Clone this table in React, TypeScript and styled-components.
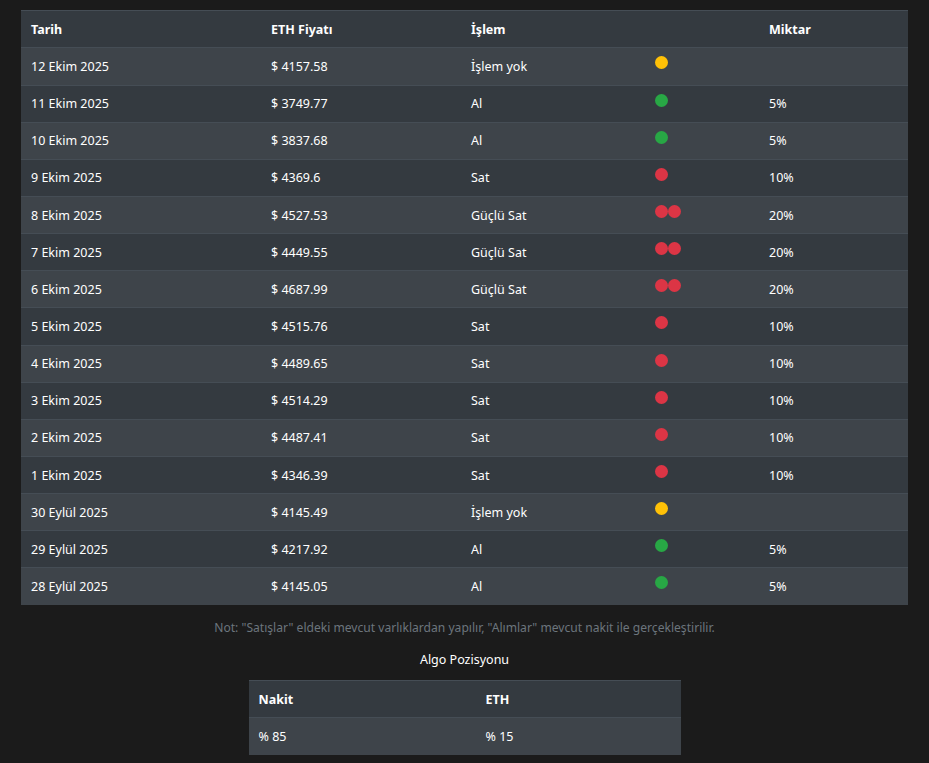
import React from "react";
import styled, { createGlobalStyle } from "styled-components";

const Global = createGlobalStyle`
  html, body { margin: 0; padding: 0; background: #1b1b1b; }
  body { font-family: "Noto Sans", "Open Sans", sans-serif; color: #fff; }
`;

const Page = styled.div`
  padding: 10px 21px 8px;
  display: flex;
  flex-direction: column;
  align-items: center;
`;

const Table = styled.table<{ $width: number }>`
  width: ${(p) => p.$width}px;
  border-collapse: collapse;
  table-layout: fixed;
  background: #343a40;
  font-size: 12.5px;
  color: #fff;
`;

const HeadCell = styled.th<{ $w: number }>`
  width: ${(p) => p.$w}px;
  text-align: left;
  font-weight: 700;
  padding: 0 10px;
  height: 37.4px;
  box-sizing: border-box;
  border-top: 1px solid #454d55;
`;

const Row = styled.tr`
  &:nth-child(odd) { background: #3e444a; }
`;

const Cell = styled.td`
  padding: 0 10px;
  height: 37.15px;
  box-sizing: border-box;
  border-top: 1px solid #454d55;
  vertical-align: middle;
`;

const DotCell = styled(Cell)`
  vertical-align: top;
  padding-top: 8px;
`;

const Dots = styled.span`
  display: inline-flex;
`;

const Dot = styled.span<{ $c: string }>`
  width: 13px;
  height: 13px;
  border-radius: 50%;
  background: ${(p) => p.$c};
  display: inline-block;
`;

const Note = styled.p`
  margin: 14px 0 0;
  font-size: 12.1px;
  color: #6c757d;
  text-align: center;
`;

const Title = styled.div`
  margin-top: 15px;
  font-size: 12.5px;
  color: #fff;
  text-align: center;
  margin-bottom: 12px;
`;

type Kind = "none" | "buy" | "sell" | "strong";
const rows: [string, string, Kind][] = [
  ["12 Ekim 2025", "4157.58", "none"],
  ["11 Ekim 2025", "3749.77", "buy"],
  ["10 Ekim 2025", "3837.68", "buy"],
  ["9 Ekim 2025", "4369.6", "sell"],
  ["8 Ekim 2025", "4527.53", "strong"],
  ["7 Ekim 2025", "4449.55", "strong"],
  ["6 Ekim 2025", "4687.99", "strong"],
  ["5 Ekim 2025", "4515.76", "sell"],
  ["4 Ekim 2025", "4489.65", "sell"],
  ["3 Ekim 2025", "4514.29", "sell"],
  ["2 Ekim 2025", "4487.41", "sell"],
  ["1 Ekim 2025", "4346.39", "sell"],
  ["30 Eylül 2025", "4145.49", "none"],
  ["29 Eylül 2025", "4217.92", "buy"],
  ["28 Eylül 2025", "4145.05", "buy"],
];

const info: Record<Kind, { label: string; amt: string; dots: string[] }> = {
  none: { label: "İşlem yok", amt: "", dots: ["#ffc107"] },
  buy: { label: "Al", amt: "5%", dots: ["#28a745"] },
  sell: { label: "Sat", amt: "10%", dots: ["#dc3545"] },
  strong: { label: "Güçlü Sat", amt: "20%", dots: ["#dc3545", "#dc3545"] },
};

export default function App() {
  return (
    <>
      <Global />
      <Page>
        <Table $width={887}>
          <thead>
            <tr>
              <HeadCell $w={240}>Tarih</HeadCell>
              <HeadCell $w={200}>ETH Fiyatı</HeadCell>
              <HeadCell $w={184}>İşlem</HeadCell>
              <HeadCell $w={114}></HeadCell>
              <HeadCell $w={149}>Miktar</HeadCell>
            </tr>
          </thead>
          <tbody>
            {rows.map(([d, p, k]) => (
              <Row key={d}>
                <Cell>{d}</Cell>
                <Cell>$ {p}</Cell>
                <Cell>{info[k].label}</Cell>
                <DotCell>
                  <Dots>
                    {info[k].dots.map((c, i) => (
                      <Dot key={i} $c={c} />
                    ))}
                  </Dots>
                </DotCell>
                <Cell>{info[k].amt}</Cell>
              </Row>
            ))}
          </tbody>
        </Table>
        <Note>Not: "Satışlar" eldeki mevcut varlıklardan yapılır, "Alımlar" mevcut nakit ile gerçekleştirilir.</Note>
        <Title>Algo Pozisyonu</Title>
        <Table $width={432}>
          <thead>
            <tr>
              <HeadCell $w={227}>Nakit</HeadCell>
              <HeadCell $w={205}>ETH</HeadCell>
            </tr>
          </thead>
          <tbody>
            <Row>
              <Cell>% 85</Cell>
              <Cell>% 15</Cell>
            </Row>
          </tbody>
        </Table>
      </Page>
    </>
  );
}
